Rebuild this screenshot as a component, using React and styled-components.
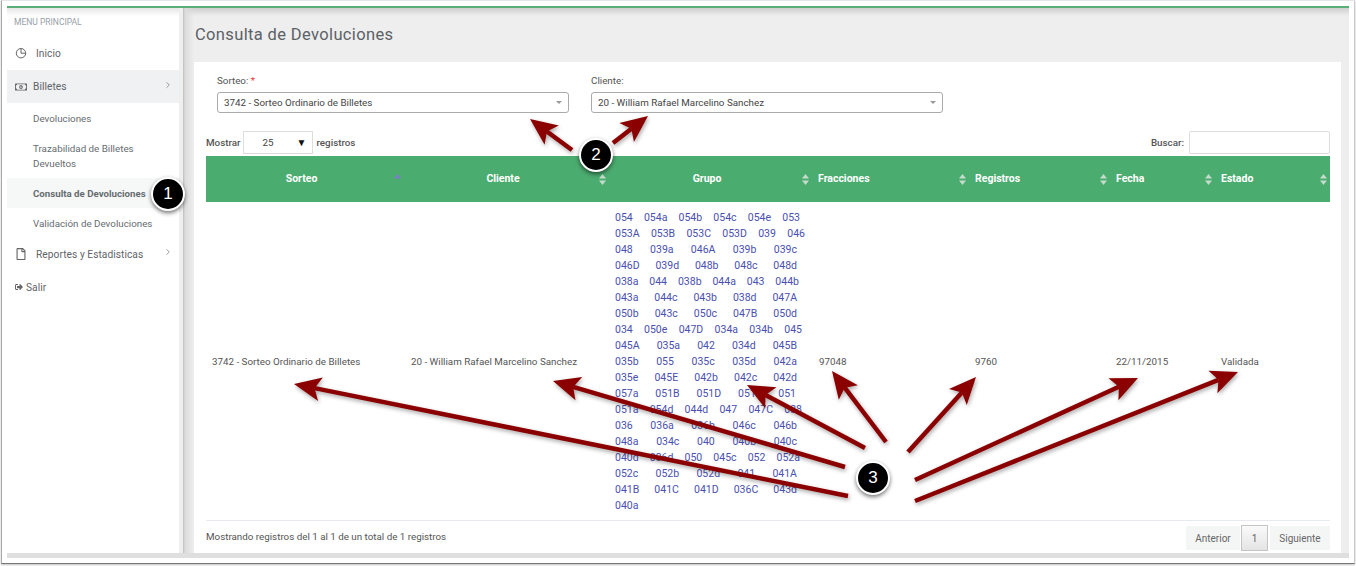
import styled, { createGlobalStyle } from "styled-components"
import { FaRegMoneyBillAlt, FaSignOutAlt, FaRegFile } from "react-icons/fa"
import { LuChevronRight } from "react-icons/lu"

const Global = createGlobalStyle`
    html, body {
        background: #fff;
        color: #555;
        font-family: Roboto, "Liberation Sans", sans-serif;
        height: 566px;
        margin: 0;
        overflow: hidden;
    }
`

const Stage = styled.div`
    height: 566px;
    overflow: hidden;
    position: relative;
    width: 1356px;
`

const Ventana = styled.div`
    background: #fff;
    border: 1px solid #a8a8a8;
    border-top-color: #e6e6e6;
    border-bottom-color: #777;
    border-right-color: #c8c8c8;
    box-shadow: 0 1px 2px rgba(0, 0, 0, 0.25);
    box-sizing: border-box;
    height: 564px;
    margin-left: 1px;
    padding: 5px 5px 5px 5px;
    width: 1354px;
`

const Contenedor = styled.div`
    background:
        linear-gradient(#dfdfdf, #dfdfdf) bottom / 100% 5px no-repeat,
        linear-gradient(#cfcfcf, #eeeeee 8px);
    border-top: 2px solid #5bae78;
    box-sizing: border-box;
    display: flex;
    height: 552px;
`

const Sidebar = styled.aside`
    background: linear-gradient(#e6e6e6, #fff 8px);
    border-right: 4px solid #efefef;
    box-sizing: border-box;
    flex: 0 0 176px;
    height: 545px;
`

const MenuTitulo = styled.div`
    color: #97a0a8;
    font-size: 8.5px;
    height: 20px;
    line-height: 12px;
    padding: 8px 0 0 7px;
`

const MenuItem = styled.div`
    align-items: center;
    background: ${props => props.$activo ? "#f0f1f2" : "transparent"};
    color: #5f6468;
    display: flex;
    font-size: 10.2px;
    height: ${props => props.$alto || 33}px;
    letter-spacing: 0.05px;
    padding-left: 8px;
    position: relative;
`

const MenuIcono = styled.span`
    align-items: center;
    color: #666;
    display: flex;
    font-size: ${props => props.$tam || 12}px;
    width: ${props => props.$ancho || 22}px;
`

const Flecha = styled.span`
    color: #888;
    display: flex;
    font-size: 10px;
    position: absolute;
    right: 6px;
    top: 50%;
    transform: translateY(-7px);
`

const SubItem = styled.div`
    align-items: center;
    background: ${props => props.$activo ? "#f6f7f7" : "transparent"};
    color: #666c70;
    display: flex;
    font-size: ${props => props.$activo ? 9.7 : 9.8}px;
    font-weight: ${props => props.$activo ? 700 : 400};
    height: ${props => props.$alto || 30}px;
    line-height: 15px;
    padding: 0 10px 0 26px;
`

const Principal = styled.main`
    background: linear-gradient(to right, #bdbdbd 0, #dcdcdc 2px, rgba(238, 238, 238, 0) 11px) left top / 11px 100% no-repeat;
    box-sizing: border-box;
    flex: 1;
    height: 545px;
    min-width: 0;
    padding: 0 8px 0 11px;
`

const Titulo = styled.h1`
    color: #5b6166;
    font-size: 16.5px;
    font-weight: 400;
    height: 54px;
    letter-spacing: 0.36px;
    line-height: 54px;
    margin: 0;
    padding-left: 1px;
`

const Tarjeta = styled.section`
    background: #fff;
    box-sizing: border-box;
    height: 491px;
    padding: 10px 11px 0 12px;
`

const Filtros = styled.div`
    display: flex;
    gap: 22px;
    height: 55px;
    padding-left: 11px;
`

const Campo = styled.div`
    width: 352px;
`

const Etiqueta = styled.label`
    color: #555;
    display: block;
    font-size: 9.8px;
    height: 20px;
    line-height: 18px;
`

const Requerido = styled.span`
    color: #e33;
`

const Selector = styled.div`
    align-items: center;
    border: 1px solid #aaa;
    border-radius: 3px;
    box-sizing: border-box;
    color: #444;
    display: flex;
    font-size: 9.8px;
    height: 21px;
    justify-content: space-between;
    padding: 0 6px;
`

const Triangulo = styled.span`
    border-left: 3px solid transparent;
    border-right: 3px solid transparent;
    border-top: 3px solid #999;
`

const Controles = styled.div`
    align-items: center;
    display: flex;
    font-size: 9.8px;
    font-weight: 500;
    height: 28px;
    justify-content: space-between;
    margin-top: 1px;
`

const Mostrar = styled.div`
    align-items: center;
    color: #555;
    display: flex;
    gap: 3px;
`

const Cantidad = styled.div`
    align-items: center;
    border: 1px solid #ddd;
    box-sizing: border-box;
    color: #444;
    display: flex;
    font-weight: 400;
    height: 23px;
    justify-content: space-between;
    padding: 0 6px 0 18px;
    width: 70px;
`

const Marca = styled.span`
    color: #111;
    font-size: 10px;
`

const Buscar = styled.div`
    align-items: center;
    display: flex;
    gap: 5px;
`

const CajaBusqueda = styled.div`
    border: 1px solid #ddd;
    border-radius: 2px;
    box-sizing: border-box;
    height: 23px;
    width: 141px;
`

const Tabla = styled.table`
    border-collapse: collapse;
    table-layout: fixed;
    width: 1124px;
`

const Cabecera = styled.th`
    background: #4bac6f;
    box-sizing: border-box;
    color: #fff;
    font-size: 10.5px;
    font-weight: 700;
    height: 46px;
    padding: ${props => props.$centrado ? "0 13px 2px 6px" : "0 6px 2px"};
    position: relative;
    text-align: ${props => props.$centrado ? "center" : "left"};
    width: ${props => props.$ancho}px;
`

const Orden = styled.svg`
    height: 11px;
    position: absolute;
    right: 3px;
    top: 18px;
    width: 7px;
`

const Celda = styled.td`
    color: #555;
    font-size: 9.8px;
    height: 318px;
    padding: 0 6px 0 ${props => props.$sangria || 6}px;
    vertical-align: middle;
`

const Grupos = styled.div`
    display: flex;
    flex-direction: column;
    padding-top: 2px;
`

const GrupoFila = styled.div`
    color: #4a4fb0;
    display: flex;
    font-size: 10.5px;
    justify-content: space-between;
    line-height: 16px;
    width: ${props => props.$ancho}px;
`

const Pie = styled.div`
    align-items: center;
    border-top: 1px solid #e6e9ed;
    color: #555;
    display: flex;
    font-size: 9.8px;
    height: 31px;
    justify-content: space-between;
    width: 1124px;
`

const Paginacion = styled.div`
    align-items: center;
    display: flex;
    margin-top: 3px;
`

const Pagina = styled.div`
    align-items: center;
    background: ${props => props.$activa ? "linear-gradient(#fafafa, #e4e4e4)" : "#f4f6f6"};
    border: ${props => props.$activa ? "1px solid #c4c4c4" : "none"};
    box-sizing: border-box;
    color: #666;
    display: flex;
    font-size: 10px;
    height: ${props => props.$activa ? 26 : 24}px;
    justify-content: center;
    margin-left: ${props => props.$margen || 0}px;
    width: ${props => props.$ancho}px;
`

const Lienzo = styled.svg`
    filter: drop-shadow(1px 2px 2px rgba(0, 0, 0, 0.35));
    height: 566px;
    left: 0;
    pointer-events: none;
    position: absolute;
    top: 0;
    width: 1356px;
`

const Insignia = styled.div`
    align-items: center;
    background: #000;
    border: 2px solid #fff;
    border-radius: 50%;
    box-shadow: 0 2px 4px rgba(0, 0, 0, 0.55);
    box-sizing: border-box;
    color: #fff;
    display: flex;
    font-family: "Liberation Sans", sans-serif;
    font-size: 17px;
    height: 34px;
    justify-content: center;
    left: ${props => props.$x - 17}px;
    position: absolute;
    top: ${props => props.$y - 17}px;
    width: 34px;
`

const filasGrupo = [
    [185, "054 054a 054b 054c 054e 053"],
    [190, "053A 053B 053C 053D 039 046"],
    [182, "048 039a 046A 039b 039c"],
    [182, "046D 039d 048b 048c 048d"],
    [184, "038a 044 038b 044a 043 044b"],
    [182, "043a 044c 043b 038d 047A"],
    [182, "050b 043c 050c 047B 050d"],
    [187, "034 050e 047D 034a 034b 045"],
    [182, "045A 035a 042 034d 045B"],
    [182, "035b 055 035c 035d 042a"],
    [182, "035e 045E 042b 042c 042d"],
    [181, "057a 051B 051D 051c 051"],
    [187, "051a 054d 044d 047 047C 038"],
    [182, "036 036a 036b 046c 046b"],
    [182, "048a 034c 040 040b 040c"],
    [185, "040d 036d 050 045c 052 052a"],
    [182, "052c 052b 052d 041 041A"],
    [182, "041B 041C 041D 036C 043d"],
    [24, "040a"],
]

const columnas = [
    { nombre: "Sorteo", ancho: 198, centrado: true, activo: true },
    { nombre: "Cliente", ancho: 205, centrado: true },
    { nombre: "Grupo", ancho: 203, centrado: true },
    { nombre: "Fracciones", ancho: 157 },
    { nombre: "Registros", ancho: 141 },
    { nombre: "Fecha", ancho: 105 },
    { nombre: "Estado", ancho: 115 },
]

const flechas = [
    [572, 150, 530, 119],
    [613, 143, 648, 116],
    [848, 496, 294, 384],
    [845, 467, 553, 381],
    [865, 448, 747, 385],
    [886, 442, 832, 371],
    [908, 452, 976, 377],
    [915, 480, 1138, 378],
    [915, 501, 1238, 372],
]

const Punta = ({ x1, y1, x2, y2 }) => {
    const angulo = Math.atan2(y2 - y1, x2 - x1)
    const largo = 27
    const media = 12
    const bx = x2 - Math.cos(angulo) * largo
    const by = y2 - Math.sin(angulo) * largo
    const nx = -Math.sin(angulo) * media
    const ny = Math.cos(angulo) * media
    const mx = x2 - Math.cos(angulo) * (largo - 6)
    const my = y2 - Math.sin(angulo) * (largo - 6)
    return (
        <g>
            <line x1={x1} y1={y1} x2={mx} y2={my} stroke="#8b0000" strokeWidth="4.5" />
            <polygon points={`${x2},${y2} ${bx + nx},${by + ny} ${mx},${my} ${bx - nx},${by - ny}`} fill="#8b0000" />
        </g>
    )
}

const IconoInicio = () => (
    <svg width="12" height="12" viewBox="0 0 12 12" fill="none" stroke="#666" strokeWidth="1">
        <path d="M6 1.5 A4.7 4.7 0 1 0 10.7 6.2 H6 Z" />
        <path d="M6 1.5 A4.7 4.7 0 0 1 10.7 6.2" />
    </svg>
)

const App = () => {
    return (
        <Stage>
            <Global />
            <Ventana>
                <Contenedor>
                    <Sidebar>
                        <MenuTitulo>MENU PRINCIPAL</MenuTitulo>
                        <MenuItem $alto={34}>
                            <MenuIcono $ancho={21}><IconoInicio /></MenuIcono>
                            Inicio
                        </MenuItem>
                        <MenuItem $activo>
                            <MenuIcono $ancho={18} $tam={12}><FaRegMoneyBillAlt /></MenuIcono>
                            Billetes
                            <Flecha><LuChevronRight /></Flecha>
                        </MenuItem>
                        <SubItem>Devoluciones</SubItem>
                        <SubItem $alto={45}>Trazabilidad de Billetes Devueltos</SubItem>
                        <SubItem $activo>Consulta de Devoluciones</SubItem>
                        <SubItem>Validación de Devoluciones</SubItem>
                        <MenuItem $alto={32}>
                            <MenuIcono $ancho={21} $tam={12}><FaRegFile /></MenuIcono>
                            Reportes y Estadisticas
                            <Flecha><LuChevronRight /></Flecha>
                        </MenuItem>
                        <MenuItem $alto={34}>
                            <MenuIcono $ancho={11} $tam={8}><FaSignOutAlt /></MenuIcono>
                            Salir
                        </MenuItem>
                    </Sidebar>
                    <Principal>
                        <Titulo>Consulta de Devoluciones</Titulo>
                        <Tarjeta>
                            <Filtros>
                                <Campo>
                                    <Etiqueta>Sorteo: <Requerido>*</Requerido></Etiqueta>
                                    <Selector>3742 - Sorteo Ordinario de Billetes<Triangulo /></Selector>
                                </Campo>
                                <Campo>
                                    <Etiqueta>Cliente:</Etiqueta>
                                    <Selector>20 - William Rafael Marcelino Sanchez<Triangulo /></Selector>
                                </Campo>
                            </Filtros>
                            <Controles>
                                <Mostrar>
                                    Mostrar
                                    <Cantidad>25<Marca>▼</Marca></Cantidad>
                                    registros
                                </Mostrar>
                                <Buscar>
                                    Buscar:
                                    <CajaBusqueda />
                                </Buscar>
                            </Controles>
                            <Tabla>
                                <thead>
                                    <tr>
                                        {columnas.map(col => (
                                            <Cabecera key={col.nombre} $ancho={col.ancho} $centrado={col.centrado}>
                                                {col.nombre}
                                                <Orden viewBox="0 0 7 11">
                                                    <path d="M3.5 0 L7 4.5 H0 Z" fill={col.activo ? "#7b7fc4" : "#c4dccc"} />
                                                    {!col.activo && <path d="M3.5 11 L7 6.5 H0 Z" fill="#c4dccc" />}
                                                </Orden>
                                            </Cabecera>
                                        ))}
                                    </tr>
                                </thead>
                                <tbody>
                                    <tr>
                                        <Celda>3742 - Sorteo Ordinario de Billetes</Celda>
                                        <Celda $sangria={7}>20 - William Rafael Marcelino Sanchez</Celda>
                                        <Celda>
                                            <Grupos>
                                                {filasGrupo.map(([ancho, fila]) => (
                                                    <GrupoFila key={fila} $ancho={ancho}>
                                                        {fila.split(" ").map(codigo => <span key={codigo}>{codigo}</span>)}
                                                    </GrupoFila>
                                                ))}
                                            </Grupos>
                                        </Celda>
                                        <Celda $sangria={7}>97048</Celda>
                                        <Celda>9760</Celda>
                                        <Celda>22/11/2015</Celda>
                                        <Celda>Validada</Celda>
                                    </tr>
                                </tbody>
                            </Tabla>
                            <Pie>
                                Mostrando registros del 1 al 1 de un total de 1 registros
                                <Paginacion>
                                    <Pagina $ancho={54}>Anterior</Pagina>
                                    <Pagina $ancho={27} $margen={1} $activa>1</Pagina>
                                    <Pagina $ancho={60} $margen={2}>Siguiente</Pagina>
                                </Paginacion>
                            </Pie>
                        </Tarjeta>
                    </Principal>
                </Contenedor>
            </Ventana>
            <Lienzo viewBox="0 0 1356 566">
                {flechas.map(([x1, y1, x2, y2]) => (
                    <Punta key={`${x2}-${y2}`} x1={x1} y1={y1} x2={x2} y2={y2} />
                ))}
            </Lienzo>
            <Insignia $x={168} $y={194}>1</Insignia>
            <Insignia $x={596} $y={155}>2</Insignia>
            <Insignia $x={873} $y={478}>3</Insignia>
        </Stage>
    )
}

export default App
